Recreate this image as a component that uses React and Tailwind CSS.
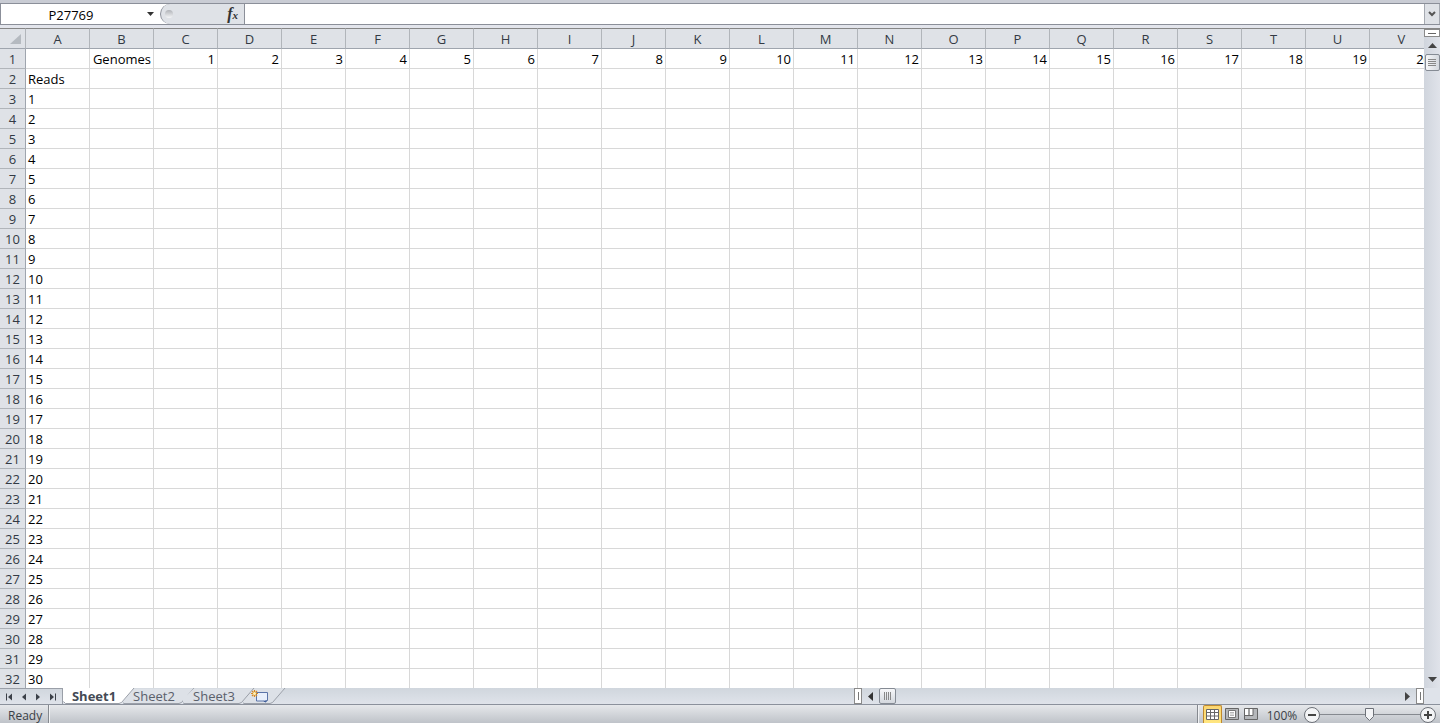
import React, { useState } from "react";

const COLUMNS = "ABCDEFGHIJKLMNOPQRSTUV".split("");
const ROWS = Array.from({ length: 32 }, (_, i) => i + 1);
const SHEETS = ["Sheet1", "Sheet2", "Sheet3"];

function cellValue(row, col) {
  if (row === 1 && col === 1) return "Genomes";
  if (row === 1 && col > 1) return col - 1;
  if (row === 2 && col === 0) return "Reads";
  if (row > 2 && col === 0) return row - 2;
  return "";
}

function FormulaBar() {
  return (
    <div className="h-7 shrink-0 bg-[#e3e5ec]">
      <div className="h-[3px] bg-[#c9ccd4]" />
      <div className="flex h-[22px] border-y border-[#8b8f99] bg-[#dfe2e7]">
        <div className="flex w-[160px] items-center border-l border-[#8b8f99] bg-white">
          <input
            aria-label="Name Box"
            defaultValue="P27769"
            className="w-[140px] bg-transparent pt-px text-center text-[13px] leading-5 text-black outline-none"
          />
          <button aria-label="Name list" className="flex h-full w-5 items-center justify-center">
            <svg width="7" height="4" viewBox="0 0 7 4">
              <path d="M0 0h7L3.5 4z" fill="#333" />
            </svg>
          </button>
        </div>
        <div className="flex w-[85px] border-r border-[#8b8f99] bg-white">
          <div className="flex w-full items-center justify-between rounded-l-full border-l border-[#8b8f99] bg-[#dfe2e7] pr-1.5 pl-1">
            <span className="h-2 w-2 rounded-full bg-gradient-to-b from-[#b0b3b8] to-[#f5f6f8]" />
            <button
              aria-label="Insert Function"
              className="font-['Liberation_Serif',serif] text-base leading-5 font-bold text-[#333] italic"
            >
              f<span className="text-[11px]">x</span>
            </button>
          </div>
        </div>
        <input aria-label="Formula" className="min-w-0 flex-1 bg-white px-1 outline-none" />
        <button
          aria-label="Expand formula bar"
          className="flex w-4 items-center justify-center border-x border-[#a5a9b1] bg-[#dfe2e7]"
        >
          <svg width="8" height="6" viewBox="0 0 8 6">
            <path d="M1 1l3 3 3-3" fill="none" stroke="#555" strokeWidth="2" />
          </svg>
        </button>
      </div>
    </div>
  );
}

function Grid() {
  return (
    <div className="min-w-0 flex-1 overflow-hidden bg-white">
      <table className="w-[1434px] table-fixed border-separate border-spacing-0">
        <colgroup>
          <col className="w-[26px]" />
          {COLUMNS.map((c) => (
            <col key={c} className="w-16" />
          ))}
        </colgroup>
        <thead>
          <tr className="h-[21px] bg-[#dfe2e7] text-[13px] leading-[18px] text-[#333a44]">
            <th
              aria-label="Select all"
              className="border-t border-r border-b border-t-[#868686] border-r-[#b1b5ba] border-b-[#9fa5ae] p-0"
            >
              <svg width="11" height="10" viewBox="0 0 11 10" className="mr-1 ml-auto">
                <path d="M11 0v10H0z" fill="#b5bac0" />
              </svg>
            </th>
            {COLUMNS.map((c) => (
              <th
                key={c}
                className="border-t border-r border-b border-t-[#868686] border-r-[#b1b5ba] border-b-[#9fa5ae] p-0 font-normal"
              >
                {c}
              </th>
            ))}
          </tr>
        </thead>
        <tbody>
          {ROWS.map((row) => (
            <tr key={row} className="h-5 text-[13px] leading-[18px]">
              <th className="border-r border-b border-r-[#9fa5ae] border-b-[#b1b5ba] bg-[#dfe2e7] px-0 pt-px pb-0 font-normal text-[#333a44]">
                {row}
              </th>
              {COLUMNS.map((c, col) => (
                <td
                  key={c}
                  className={`border-r border-b border-[#d8d8d8] px-0.5 pt-px pb-0 text-black ${
                    col === 0 ? "text-left" : "text-right"
                  }`}
                >
                  {cellValue(row, col)}
                </td>
              ))}
            </tr>
          ))}
        </tbody>
      </table>
    </div>
  );
}

function VerticalScroll() {
  return (
    <div className="flex w-4 shrink-0 flex-col items-center border-t border-[#868686] bg-gradient-to-r from-[#d0d5dd] to-[#e0e3ea]">
      <div className="flex h-2 w-full items-center justify-center border border-[#8a8a8a] bg-white">
        <div className="h-px w-2 bg-[#666]" />
      </div>
      <button aria-label="Scroll up" className="flex h-[17px] w-full items-center justify-center">
        <svg width="9" height="5" viewBox="0 0 9 5">
          <path d="M0 5h9L4.5 0z" fill="#444" />
        </svg>
      </button>
      <div className="flex h-[17px] w-[15px] flex-col items-center justify-center gap-px rounded-xs border border-[#858b94] bg-gradient-to-r from-[#f6f7f9] to-[#d4d8de]">
        <div className="h-px w-2 bg-[#888]" />
        <div className="h-px w-2 bg-[#888]" />
        <div className="h-px w-2 bg-[#888]" />
        <div className="h-px w-2 bg-[#888]" />
      </div>
      <div className="flex-1" />
      <button aria-label="Scroll down" className="flex h-[18px] w-full items-center justify-center">
        <svg width="9" height="5" viewBox="0 0 9 5">
          <path d="M0 0h9L4.5 5z" fill="#444" />
        </svg>
      </button>
    </div>
  );
}

function NavIcon({ d, label }) {
  return (
    <button aria-label={label} className="flex h-full w-[14px] items-center justify-center">
      <svg width="8" height="8" viewBox="0 0 8 8" fill="#3c4149">
        <path d={d} />
      </svg>
    </button>
  );
}

function Splitter() {
  return (
    <div className="flex w-2 shrink-0 items-center justify-center border border-[#8a8a8a] bg-white">
      <div className="h-2 w-px bg-[#777]" />
    </div>
  );
}

function SheetTabs({ active, onSelect }) {
  return (
    <div className="flex min-w-0 flex-1">
      {SHEETS.map((name, i) => (
        <button
          key={name}
          onClick={() => onSelect(i)}
          className={`relative h-4 w-[60px] pl-0.5 text-[13px] leading-4 ${
            active === i ? "z-10 font-bold text-[#444a54]" : "text-[#5a606b]"
          }`}
        >
          <svg width="72" height="16" viewBox="0 0 72 16" className="absolute top-0 left-0">
            <path
              d={i === 0 ? "M0 0H71L58 15.500H2L0 13z" : "M11 .5H71L58 15.500H1L-2 13z"}
              fill={active === i ? "#fff" : "#dde1e7"}
            />
            <path
              d={i === 0 ? "M71 0L58.500 14.500L56 15.500H2.500L.5 13.500" : "M71 0L58.500 14.500L56 15.500H1L-1 14"}
              fill="none"
              stroke="#9a9fa8"
            />
          </svg>
          <span className="relative">{name}</span>
        </button>
      ))}
      <button aria-label="Insert Worksheet" className="h-4 w-11">
        <svg width="44" height="16" viewBox="0 0 44 16">
          <path d="M11 .5H42L29 15.500H1L-1 13z" fill="#dde1e7" />
          <path d="M42 0L29.500 14.500L27 15.500H1L-1 14" fill="none" stroke="#9a9fa8" />
          <path d="M13.500 4.500h11v8l-2 1.500-2-1h-7z" fill="#e8effb" stroke="#5b74a8" />
          <path d="M20 13l4.500-1-2 2z" fill="#2f4f8f" />
          <path
            d="M11.500 2v7M8 5.500h7M9 3l5 5M14 3L9 8"
            fill="none"
            stroke="#d98a1e"
            strokeWidth="1.200"
          />
          <circle cx="11.500" cy="5.500" r="1.500" fill="#fff3b8" />
        </svg>
      </button>
    </div>
  );
}

function SheetBar({ active, onSelect }) {
  return (
    <div className="flex h-[17px] shrink-0 border-b border-[#8b919c] bg-gradient-to-b from-[#d0d6dd] to-[#dfe3ea]">
      <div className="flex w-[63px] shrink-0 items-center justify-between border-t border-r border-[#9a9fa8] px-0.5">
        <NavIcon label="First sheet" d="M1 0.500h1v7H1zM7 .5v7L3 4z" />
        <NavIcon label="Previous sheet" d="M6 .5v7L2 4z" />
        <NavIcon label="Next sheet" d="M2 .5v7L6 4z" />
        <NavIcon label="Last sheet" d="M6 .5h1v7H6zM1 .5v7L5 4z" />
      </div>
      <SheetTabs active={active} onSelect={onSelect} />
      <div className="flex w-[41%] max-w-[586px] shrink-0">
        <Splitter />
        <button aria-label="Scroll left" className="flex w-[17px] items-center justify-center">
          <svg width="5" height="9" viewBox="0 0 5 9">
            <path d="M5 0v9L0 4.500z" fill="#333" />
          </svg>
        </button>
        <div className="flex w-[17px] items-center justify-center gap-px rounded-xs border border-[#858b94] bg-gradient-to-b from-[#f6f7f9] to-[#d4d8de]">
          <div className="h-2 w-px bg-[#888]" />
          <div className="h-2 w-px bg-[#888]" />
          <div className="h-2 w-px bg-[#888]" />
          <div className="h-2 w-px bg-[#888]" />
        </div>
        <div className="flex-1" />
        <button aria-label="Scroll right" className="flex w-[17px] items-center justify-center">
          <svg width="5" height="9" viewBox="0 0 5 9">
            <path d="M0 0v9L5 4.500z" fill="#444" />
          </svg>
        </button>
        <Splitter />
        <div className="w-4 bg-[#dfe3ea]" />
      </div>
    </div>
  );
}

function StatusBar() {
  const [zoom, setZoom] = useState(100);

  return (
    <div className="flex h-[18px] shrink-0 items-center overflow-hidden bg-gradient-to-b from-[#e6e8eb] to-[#bfc3c9] text-xs leading-[18px] text-[#3b3f46]">
      <span className="w-12 pt-1 pl-2">Ready</span>
      <div className="h-full w-0.5 border-l border-[#85898f] bg-[#f1f2f4]" />
      <div className="flex-1" />
      <div className="mr-1 h-full w-0.5 border-l border-[#85898f] bg-[#f1f2f4]" />
      <button
        aria-label="Normal"
        className="flex h-full w-[19px] items-center justify-center rounded-t-xs border border-b-0 border-[#c08a2e] bg-gradient-to-b from-[#fbd671] to-[#ffe680]"
      >
        <svg width="13" height="11" viewBox="0 0 13 11">
          <path d="M.5 .5h12v10H.5zM.5 3.500h12M.5 7h12M4.500 .5v10M8.500 .5v10" fill="#fff" stroke="#666" />
        </svg>
      </button>
      <button aria-label="Page Layout" className="flex h-full w-[19px] items-center justify-center">
        <svg width="14" height="12" viewBox="0 0 14 12">
          <path d="M.5 .5h13v11H.5z" fill="#b5b7ba" stroke="#666" />
          <path d="M3.500 2.500h7v7h-7z" fill="#fff" stroke="#777" />
          <path d="M5 4.500h4M5 6h4M5 7.500h4" stroke="#999" strokeWidth=".7" />
        </svg>
      </button>
      <button aria-label="Page Break Preview" className="flex h-full w-[19px] items-center justify-center">
        <svg width="14" height="12" viewBox="0 0 14 12">
          <path d="M.5 .5h13v11H.5z" fill="#b5b7ba" stroke="#666" />
          <path d="M1 1h3.500v6H1zM5.500 1H9v6H5.500z" fill="#fff" />
          <path d="M5 1v6M9 1v6.500H1" fill="none" stroke="#666" />
        </svg>
      </button>
      <button className="w-11 pt-1 text-center">{zoom}%</button>
      <button aria-label="Zoom out" onClick={() => setZoom(Math.max(10, zoom - 10))} className="pt-0.5">
        <svg width="16" height="16" viewBox="0 0 16 16">
          <circle cx="8" cy="8" r="7.500" fill="#f3f4f6" stroke="#6d7178" />
          <path d="M4 8h8" stroke="#444" strokeWidth="2" />
        </svg>
      </button>
      <div className="relative h-full w-[100px]">
        <svg width="100" height="18" viewBox="0 0 100 18">
          <path d="M0 9.500h100" stroke="#85898f" />
        </svg>
        <div className="absolute inset-y-0 -ml-[5px]" style={{ left: `${Math.min(100, zoom / 2)}%` }}>
          <svg width="10" height="18" viewBox="0 0 10 18">
            <path d="M.5 3.500h8v8l-4 4-4-4z" fill="#f3f4f6" stroke="#6d7178" />
          </svg>
        </div>
        <input
          type="range"
          aria-label="Zoom"
          min="10"
          max="200"
          value={zoom}
          onChange={(e) => setZoom(Number(e.target.value))}
          className="absolute inset-0 w-full opacity-0"
        />
      </div>
      <button aria-label="Zoom in" onClick={() => setZoom(Math.min(200, zoom + 10))} className="mr-1 pt-0.5">
        <svg width="16" height="16" viewBox="0 0 16 16">
          <circle cx="8" cy="8" r="7.500" fill="#f3f4f6" stroke="#6d7178" />
          <path d="M4 8h8M8 4v8" stroke="#444" strokeWidth="2" />
        </svg>
      </button>
    </div>
  );
}

export default function App() {
  const [active, setActive] = useState(0);

  return (
    <div className="flex h-screen flex-col overflow-hidden font-['Open_Sans',sans-serif]">
      <FormulaBar />
      <div className="flex min-h-0 flex-1">
        <Grid />
        <VerticalScroll />
      </div>
      <SheetBar active={active} onSelect={setActive} />
      <StatusBar />
    </div>
  );
}
